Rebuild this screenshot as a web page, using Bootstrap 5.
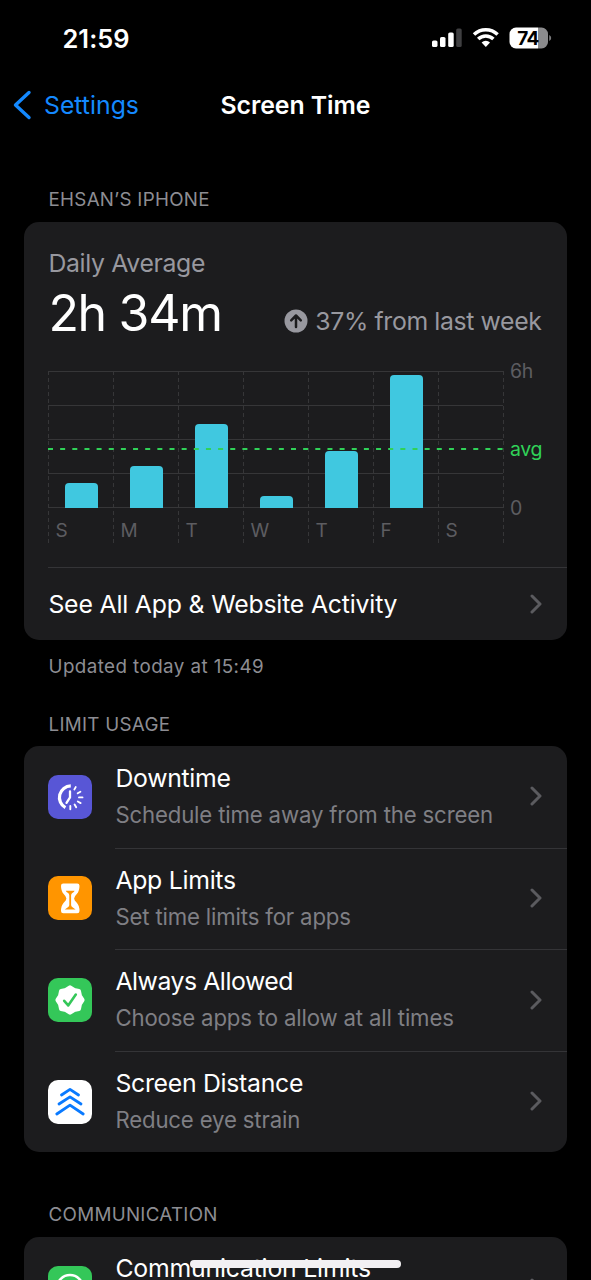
<!DOCTYPE html>
<html lang="en" data-bs-theme="dark">
<head>
<meta charset="utf-8">
<meta name="viewport" content="width=device-width, initial-scale=1">
<title>Screen Time</title>
<link href="https://cdn.jsdelivr.net/npm/bootstrap@5.3.0/dist/css/bootstrap.min.css" rel="stylesheet">
<style>
html, body { height: 1280px; overflow: hidden; }
body { background: #000; color: #fff; font-family: Inter, "Liberation Sans", sans-serif; font-size: 24.8px; line-height: 32px; letter-spacing: -.28px; white-space: nowrap; }
svg { display: block; flex: none; }
.status-bar { height: 78px; padding: 0 39px 0 62.5px; }
.clock { font-size: 25.4px; font-weight: 600; letter-spacing: .05px; }
.title-bar { height: 54px; }
.back-link { color: #1489ff; text-decoration: none; gap: 12px; padding-left: 13px; letter-spacing: 0; }
.screen-title { font-weight: 600; font-size: 24.8px; letter-spacing: -.05px; }
.section-label { font-size: 18.8px; line-height: 24px; letter-spacing: .28px; color: #8d8d93; margin-left: 48.5px; }
.updated { letter-spacing: .42px; }
.panel { background: #1c1c1e; border-radius: 15px; margin: 0 24.5px 0 24.4px; }
.usage { height: 418px; padding-left: 24px; }
.dim { color: #98989f; }
.average { letter-spacing: -.34px; }
.delta { letter-spacing: -.37px; }
.see-all { letter-spacing: -.18px; }
.total { font-size: 50px; line-height: 60px; letter-spacing: -1.3px; }
.chart { width: 455px; height: 173px; margin-top: 28px; }
.day { width: 65px; }
.plot { height: 136.5px; }
.bar { width: 33px; margin-left: 16.5px; background: #40c8e0; border-radius: 4px 4px 0 0; }
.day-name { font-size: 19px; line-height: 24px; color: #5d5d61; padding: 11px 0 0 7px; letter-spacing: 0; }
.axis { font-size: 19.5px; line-height: 24px; color: #5d5d61; left: 461.5px; letter-spacing: -.3px; }
.avg { color: #30d158; }
.all-activity { border-top: 1px solid #343437; height: 73px; margin-top: 23px; padding-right: 25px; }
.entry { height: 101.6px; padding-left: 24px; }
.entry-body { margin-left: 23px; padding: 16px 25px 0 0; }
.entry + .entry .entry-body { border-top: 1px solid #343437; padding-top: 15px; }
.entry-title { line-height: 33px; }
.entry-note { color: #7f7f84; font-size: 22.2px; line-height: 30px; margin-top: 5px; letter-spacing: -.16px; }
.tile { width: 44px; height: 44px; border-radius: 10px; }
.home-bar { width: 211px; height: 8px; border-radius: 4px; background: #f2f0f3; left: 190px; top: 1260px; }
</style>
</head>
<body>
<div class="status-bar d-flex justify-content-between align-items-center">
  <span class="clock">21:59</span>
  <svg width="120" height="26" viewBox="0 0 120 26">
    <g fill="#fff"><rect x="0" y="14.500" width="5.500" height="6.500" rx="1.600"/><rect x="8" y="11" width="5.500" height="10" rx="1.600"/><rect x="16.200" y="6.500" width="5.500" height="14.500" rx="1.600"/></g>
    <rect x="24.200" y="2.500" width="5.500" height="18.500" rx="1.600" fill="#3f3f41"/>
    <g fill="none" stroke="#fff" stroke-width="3.500"><path d="M42 8.400a17 17 0 0 1 23.600 0"/><path d="M46.200 13a11 11 0 0 1 15.200 0"/></g>
    <path d="M49.600 16.400a6.200 6.200 0 0 1 8.400 0L53.800 21Z" fill="#fff"/>
    <path d="M84 1.500h22v21H84a6.500 6.500 0 0 1-6.500-6.500V8A6.500 6.500 0 0 1 84 1.500Z" fill="#fff"/>
    <path d="M106 1.500h3.500A6.500 6.500 0 0 1 116 8v8a6.500 6.500 0 0 1-6.500 6.500H106Z" fill="#8b8b8d"/>
    <path d="M117.200 9q2 1 2 3t-2 3Z" fill="#7b7b7d"/>
    <text x="96" y="18.900" text-anchor="middle" font-family="Inter, sans-serif" font-size="19" font-weight="700" letter-spacing="-.7">74</text>
  </svg>
</div>
<nav class="title-bar position-relative d-flex align-items-center justify-content-center">
  <a href="#" class="back-link d-flex align-items-center position-absolute start-0">
    <svg width="19" height="30" viewBox="0 0 19 30"><path d="M16 2.500 2.500 15 16 27.500" fill="none" stroke="#1489ff" stroke-width="3.400" stroke-linecap="round" stroke-linejoin="round"/></svg>
    <span>Settings</span>
  </a>
  <span class="screen-title">Screen Time</span>
</nav>

<div class="section-label" style="margin-top:56px">EHSAN’S IPHONE</div>
<section class="panel usage" style="margin-top:10px">
  <div class="dim average" style="padding-top:25px">Daily Average</div>
  <div class="d-flex justify-content-between align-items-end" style="padding-right:25px;margin-top:4px">
    <span class="total">2h 34m</span>
    <span class="dim d-flex align-items-center" style="gap:7px;margin-bottom:6px">
      <svg width="24" height="24" viewBox="0 0 24 24"><circle cx="12" cy="12" r="11.500" fill="#98989f"/><path d="M12 18V7M7.200 11.300 12 6.500l4.800 4.800" fill="none" stroke="#1c1c1e" stroke-width="2.500" stroke-linecap="round" stroke-linejoin="round"/></svg>
      <span class="delta">37% from last week</span>
    </span>
  </div>
  <div class="chart position-relative d-flex">
    <svg class="position-absolute top-0 start-0" width="456" height="173">
      <path d="M0 .5H455M0 34.500H455M0 68.500H455M0 102.500H455M0 136.500H455" stroke="#363638"/>
      <path d="M.5 0V173M65.500 0V173M130.500 0V173M195.500 0V173M260.500 0V173M325.500 0V173M390.500 0V173M455.500 0V173" stroke="#363638" stroke-dasharray="4 3"/>
    </svg>
    <div class="day position-relative"><div class="plot d-flex align-items-end"><div class="bar" style="height:24.500px"></div></div><div class="day-name">S</div></div>
    <div class="day position-relative"><div class="plot d-flex align-items-end"><div class="bar" style="height:42px"></div></div><div class="day-name">M</div></div>
    <div class="day position-relative"><div class="plot d-flex align-items-end"><div class="bar" style="height:84px"></div></div><div class="day-name">T</div></div>
    <div class="day position-relative"><div class="plot d-flex align-items-end"><div class="bar" style="height:12px"></div></div><div class="day-name">W</div></div>
    <div class="day position-relative"><div class="plot d-flex align-items-end"><div class="bar" style="height:57px"></div></div><div class="day-name">T</div></div>
    <div class="day position-relative"><div class="plot d-flex align-items-end"><div class="bar" style="height:133px"></div></div><div class="day-name">F</div></div>
    <div class="day position-relative"><div class="plot"></div><div class="day-name">S</div></div>
    <svg class="position-absolute start-0" style="top:77px" width="455" height="2"><path d="M0 1H455" stroke="#30d158" stroke-width="2" stroke-dasharray="5 7.150"/></svg>
    <span class="axis position-absolute" style="top:-12px">6h</span>
    <span class="axis avg position-absolute" style="top:66px">avg</span>
    <span class="axis position-absolute" style="top:125px">0</span>
  </div>
  <div class="all-activity d-flex justify-content-between align-items-center">
    <span class="see-all">See All App &amp; Website Activity</span>
    <svg width="12" height="20" viewBox="0 0 12 20"><path d="m2 2 8 8-8 8" fill="none" stroke="#5b5b5f" stroke-width="3" stroke-linecap="round" stroke-linejoin="round"/></svg>
  </div>
</section>
<div class="section-label updated" style="margin-top:15px">Updated today at 15:49</div>

<div class="section-label" style="margin-top:34px">LIMIT USAGE</div>
<section class="panel" style="margin-top:9px">
  <div class="entry d-flex">
    <div class="tile align-self-center flex-shrink-0" style="background:#5856d6">
      <svg width="44" height="44" viewBox="0 0 44 44" fill="none" stroke="#fff" stroke-linecap="round">
        <path d="M22.800 10.800a11.700 11.700 0 0 0-5.400 21.900" stroke-width="3.200" stroke-linecap="butt"/>
        <path d="M22 16.300v6.200l-3.500 5.300" stroke-width="2.300"/>
        <path d="M26.400 14.400l1.300-2.300M29.700 18.300l2.700-1.600M31 22.400h3.500M29.800 26.500l2.800 1.600M26.600 29.600l1.600 2.700M22.300 31v3.200" stroke-width="1.900"/>
      </svg>
    </div>
    <div class="entry-body d-flex justify-content-between flex-grow-1">
      <div><div class="entry-title">Downtime</div><div class="entry-note">Schedule time away from the screen</div></div>
      <svg class="align-self-center" style="margin-bottom:17px" width="12" height="20" viewBox="0 0 12 20"><path d="m2 2 8 8-8 8" fill="none" stroke="#5b5b5f" stroke-width="3" stroke-linecap="round" stroke-linejoin="round"/></svg>
    </div>
  </div>
  <div class="entry d-flex">
    <div class="tile align-self-center flex-shrink-0" style="background:#ff9500">
      <svg width="44" height="44" viewBox="0 0 44 44">
        <path d="M15.300 7.500h13.900q2.300 0 2.300 2.200 0 5.300-2.700 8.300-2.700 2.700-2.700 4.400t2.700 4.400q2.700 3 2.700 8.300 0 2.200-2.300 2.200H15.300q-2.300 0-2.300-2.200 0-5.300 2.700-8.300 2.700-2.700 2.700-4.400t-2.700-4.400Q13 15 13 9.700q0-2.200 2.300-2.200Z" fill="#fff"/>
        <path d="M17.800 14.800h8.800q-.4 1.600-2.300 2.200-1.200.6-1.200 2.600v9.400q0 1.400 1.400 2.200l3.100 2.300H16.800l3.100-2.300q1.400-.8 1.400-2.200v-9.400q0-2-1.200-2.600-1.900-.6-2.300-2.200Z" fill="#ff9500"/>
      </svg>
    </div>
    <div class="entry-body d-flex justify-content-between flex-grow-1">
      <div><div class="entry-title">App Limits</div><div class="entry-note">Set time limits for apps</div></div>
      <svg class="align-self-center" style="margin-bottom:16px" width="12" height="20" viewBox="0 0 12 20"><path d="m2 2 8 8-8 8" fill="none" stroke="#5b5b5f" stroke-width="3" stroke-linecap="round" stroke-linejoin="round"/></svg>
    </div>
  </div>
  <div class="entry d-flex">
    <div class="tile align-self-center flex-shrink-0" style="background:#34c759">
      <svg width="44" height="44" viewBox="0 0 44 44">
        <path transform="translate(22 22)" d="M0-12.300 4-9.700 8.700-8.700 9.700-4 12.300 0 9.700 4 8.700 8.700 4 9.700 0 12.300-4 9.700-8.700 8.700-9.700 4-12.300 0-9.700-4-8.700-8.700-4-9.700Z" fill="#fff" stroke="#fff" stroke-width="4.600" stroke-linejoin="round"/>
        <path d="m16.200 22.800 4 4.600 7.600-10.800" fill="none" stroke="#34c759" stroke-width="2.600" stroke-linecap="round" stroke-linejoin="round"/>
      </svg>
    </div>
    <div class="entry-body d-flex justify-content-between flex-grow-1">
      <div><div class="entry-title" style="letter-spacing:-.45px">Always Allowed</div><div class="entry-note">Choose apps to allow at all times</div></div>
      <svg class="align-self-center" style="margin-bottom:16px" width="12" height="20" viewBox="0 0 12 20"><path d="m2 2 8 8-8 8" fill="none" stroke="#5b5b5f" stroke-width="3" stroke-linecap="round" stroke-linejoin="round"/></svg>
    </div>
  </div>
  <div class="entry d-flex">
    <div class="tile align-self-center flex-shrink-0" style="background:#fff">
      <svg width="44" height="44" viewBox="0 0 44 44" fill="none" stroke="#0a7aff" stroke-width="2.800" stroke-linecap="round" stroke-linejoin="round">
        <path d="m13.500 15 8.500-5.700 8.500 5.700M11 24l11-7.200L33 24M8.800 34 22 25.200 35.200 34"/>
      </svg>
    </div>
    <div class="entry-body d-flex justify-content-between flex-grow-1">
      <div><div class="entry-title">Screen Distance</div><div class="entry-note">Reduce eye strain</div></div>
      <svg class="align-self-center" style="margin-bottom:17px" width="12" height="20" viewBox="0 0 12 20"><path d="m2 2 8 8-8 8" fill="none" stroke="#5b5b5f" stroke-width="3" stroke-linecap="round" stroke-linejoin="round"/></svg>
    </div>
  </div>
</section>

<div class="section-label" style="margin-top:51px">COMMUNICATION</div>
<section class="panel" style="margin-top:10px">
  <div class="entry d-flex">
    <div class="tile align-self-center flex-shrink-0" style="background:#34c759">
      <svg width="44" height="44" viewBox="0 0 44 44"><circle cx="22" cy="22" r="13" fill="none" stroke="#fff" stroke-width="2.500"/></svg>
    </div>
    <div class="entry-body d-flex justify-content-between flex-grow-1" style="padding-top:15px">
      <div class="entry-title" style="letter-spacing:-.2px">Communication Limits</div>
      <svg class="align-self-center" style="margin-bottom:16px" width="12" height="20" viewBox="0 0 12 20"><path d="m2 2 8 8-8 8" fill="none" stroke="#5b5b5f" stroke-width="3" stroke-linecap="round" stroke-linejoin="round"/></svg>
    </div>
  </div>
</section>
<div class="home-bar position-absolute"></div>
<script src="https://cdn.jsdelivr.net/npm/bootstrap@5.3.0/dist/js/bootstrap.bundle.min.js"></script>
</body>
</html>
